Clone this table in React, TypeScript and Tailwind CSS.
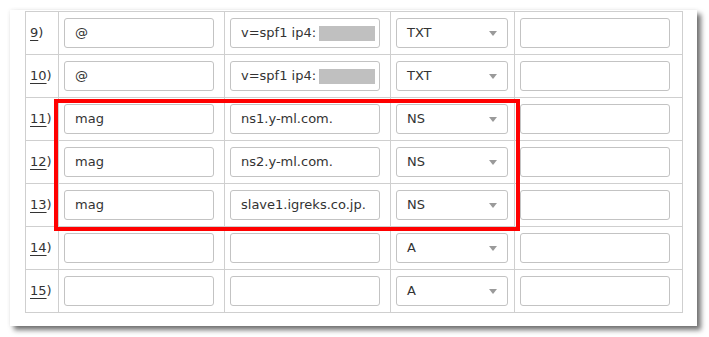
import React from "react";

type Row = {
  no: number;
  name: string;
  value: string;
  masked?: boolean;
  type: string;
};

const rows: Row[] = [
  { no: 9, name: "@", value: "v=spf1 ip4:", masked: true, type: "TXT" },
  { no: 10, name: "@", value: "v=spf1 ip4:", masked: true, type: "TXT" },
  { no: 11, name: "mag", value: "ns1.y-ml.com.", type: "NS" },
  { no: 12, name: "mag", value: "ns2.y-ml.com.", type: "NS" },
  { no: 13, name: "mag", value: "slave1.igreks.co.jp.", type: "NS" },
  { no: 14, name: "", value: "", type: "A" },
  { no: 15, name: "", value: "", type: "A" },
];

const font = { fontFamily: '"DejaVu Sans", "Noto Sans CJK JP", sans-serif' };

const Field = ({ children, w = "w-[150px]" }: { children?: React.ReactNode; w?: string }) => (
  <div
    className={`${w} h-[30px] border border-[#c3c3c3] rounded-[3px] bg-white flex items-center pl-[10px] text-[13px] text-[#333] whitespace-nowrap overflow-hidden`}
  >
    {children}
  </div>
);

const TypeSelect = ({ value }: { value: string }) => (
  <div className="w-[112px] h-[30px] border border-[#c3c3c3] rounded-[3px] bg-white flex items-center justify-between pl-[10px] pr-[10px] text-[13px] text-[#333]">
    <span>{value}</span>
    <svg width="8" height="5" viewBox="0 0 8 5">
      <path d="M0 0h8L4 5z" fill="#9a9a9a" />
    </svg>
  </div>
);

const cell = "border-r border-b border-[#cfcfcf] h-[43px] flex items-center";

export default function App() {
  return (
    <div className="bg-white w-[709px] h-[337px] pt-[10px] pl-[10px]" style={font}>
      <div className="relative w-[687px] h-[316px] bg-white shadow-[4px_4px_5px_rgba(0,0,0,0.55),0_0_4px_rgba(0,0,0,0.08)] pl-[15px] pt-[1px]">
        <div className="grid grid-cols-[33px_166px_166px_124px_168px] w-[658px] border-t border-l border-[#cfcfcf]">
          {rows.map((r) => (
            <React.Fragment key={r.no}>
              <div className={`${cell} pl-[4px] text-[13px] text-[#333]`}>
                <span className="underline underline-offset-[3px]">{r.no}</span>
                <span>)</span>
              </div>
              <div className={`${cell} pl-[5px]`}>
                <Field>{r.name}</Field>
              </div>
              <div className={`${cell} pl-[5px]`}>
                <Field>
                  {r.value}
                  {r.masked && <span className="inline-block w-[56px] h-[15px] bg-[#c0c0c0] ml-[3px]" />}
                </Field>
              </div>
              <div className={`${cell} pl-[5px]`}>
                <TypeSelect value={r.type} />
              </div>
              <div className={`${cell} pl-[5px]`}>
                <Field />
              </div>
            </React.Fragment>
          ))}
        </div>
        {/* highlight around the NS records */}
        <div className="absolute left-[44px] top-[89px] w-[466px] h-[132px] border-4 border-[#ff0000]" />
      </div>
    </div>
  );
}
